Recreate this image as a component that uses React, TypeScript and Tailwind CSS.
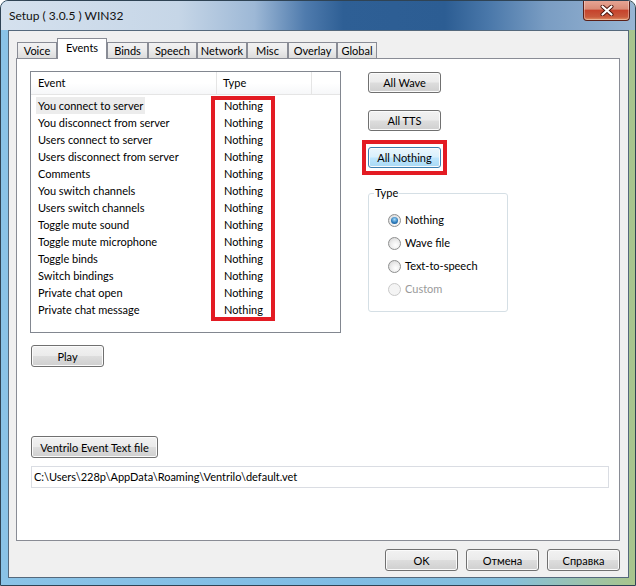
import clsx from "clsx";

const EVENTS = [
  "You connect to server",
  "You disconnect from server",
  "Users connect to server",
  "Users disconnect from server",
  "Comments",
  "You switch channels",
  "Users switch channels",
  "Toggle mute sound",
  "Toggle mute microphone",
  "Toggle binds",
  "Switch bindings",
  "Private chat open",
  "Private chat message",
];

const TABS = [
  { label: "Voice", w: "w-[40px]" },
  { label: "Events", w: "w-[50px]", active: true },
  { label: "Binds", w: "w-[41px]" },
  { label: "Speech", w: "w-[49px]" },
  { label: "Network", w: "w-[50px]" },
  { label: "Misc", w: "w-[41px]" },
  { label: "Overlay", w: "w-[49px]" },
  { label: "Global", w: "w-[40px]" },
];

function Btn({
  children,
  className,
  hot,
}: {
  children: React.ReactNode;
  className?: string;
  hot?: boolean;
}) {
  return (
    <button
      className={clsx(
        "flex items-center justify-center rounded-[3px] border font-normal leading-none text-black shadow-[inset_0_0_0_1px_#fbfbfb]",
        hot
          ? "border-[#3c7fb1] bg-[linear-gradient(180deg,#eaf6fd_0%,#d9f0fc_48%,#bee6fd_52%,#a7d9f5_100%)]"
          : "border-[#707070] bg-[linear-gradient(180deg,#f2f2f2_0%,#ebebeb_48%,#dddddd_52%,#cfcfcf_100%)]",
        className,
      )}
    >
      {children}
    </button>
  );
}

function Radio({ label, checked, disabled }: { label: string; checked?: boolean; disabled?: boolean }) {
  return (
    <div className="flex h-[23px] items-center">
      <span
        className={clsx(
          "flex h-[13px] w-[13px] items-center justify-center rounded-full border",
          disabled
            ? "border-[#c9c9c9] bg-[#f4f4f4]"
            : "border-[#8e8f8f] bg-[radial-gradient(circle_at_60%_65%,#ffffff_0%,#eeeeee_45%,#d0d0d0_100%)]",
        )}
      >
        {checked && (
          <span className="h-[7px] w-[7px] rounded-full bg-[radial-gradient(circle_at_50%_35%,#a6dcfb_0%,#2f7dbc_55%,#0c4a86_100%)]" />
        )}
      </span>
      <span className={clsx("ml-[4px]", disabled && "text-[#9a9a9a]")}>{label}</span>
    </div>
  );
}

// Ventrilo setup dialog, Events tab, Windows 7 Aero look.
export default function App() {
  return (
    <div className="flex h-[586px] w-[636px] flex-col overflow-hidden rounded-t-[8px] border border-[#2f4354] bg-[linear-gradient(90deg,#8ac3e7_0%,#7fbce4_55%,#86bfdc_80%,#a9c58c_100%)] font-['Lato',sans-serif] text-[11px] text-black">
      {/* Title bar */}
      <div className="flex h-[29px] shrink-0 items-start justify-between bg-[linear-gradient(90deg,#d5e1ee_0%,#c6d6e7_28%,#9db8d6_40%,#4f7bad_48%,#2e5f95_54%,#2c5d93_70%,#4a78aa_77%,#7a9dc3_86%,#98b5d3_100%)] pl-[8px] pr-[5px]">
        <span className="pt-[7px] text-[12px] leading-[16px] text-[#111]">Setup ( 3.0.5 ) WIN32</span>
        <div className="-mt-px flex h-[21px] w-[47px] items-center justify-center rounded-b-[4px] border border-t-0 border-[#5b1f17] bg-[linear-gradient(180deg,#e8a797_0%,#d98b77_45%,#c6432c_52%,#c95a3d_85%,#e39466_100%)] shadow-[inset_0_0_0_1px_rgba(255,255,255,0.35)]">
          <svg width="14" height="11" viewBox="0 0 14 11">
            <path d="M2.5 1.5 L11.5 9.5 M11.5 1.5 L2.5 9.5" stroke="#4a140c" strokeWidth="4" strokeLinecap="round" />
            <path d="M2.5 1.5 L11.5 9.5 M11.5 1.5 L2.5 9.5" stroke="#ffffff" strokeWidth="2.2" strokeLinecap="round" />
          </svg>
        </div>
      </div>

      {/* Client area */}
      <div className="ml-[7px] mr-[6px] flex h-[548px] flex-col border border-[#55697c] bg-[#f0f0f0] px-[7px] pr-[8px] pt-[7px]">
        {/* Tabs */}
        <div className="ml-px flex h-[20px] items-end">
          {TABS.map((t) => (
            <div
              key={t.label}
              className={clsx(
                "flex items-center justify-center border border-b-0 border-[#898c95] leading-[15px]",
                t.w,
                t.active
                  ? "relative z-10 -mb-px h-[21px] bg-white pb-[3px]"
                  : "h-[16px] bg-[linear-gradient(180deg,#f2f2f2_0%,#ebebeb_50%,#dcdcdc_100%)]",
              )}
            >
              {t.label}
            </div>
          ))}
        </div>

        {/* Tab panel */}
        <div className="flex h-[483px] flex-col border border-[#898c95] bg-white pl-[13px] pt-[12px]">
          <div className="flex">
            {/* Event list + Play */}
            <div className="flex flex-col">
              <div className="relative h-[262px] w-[311px] border border-[#828790] bg-white">
                <div className="flex h-[23px] border-b border-[#e5e5e5] bg-[linear-gradient(180deg,#ffffff_0%,#ffffff_50%,#f6f7f9_100%)]">
                  <div className="flex w-[186px] items-center border-r border-[#e5e5e5] pl-[7px]">Event</div>
                  <div className="flex w-[95px] items-center border-r border-[#e5e5e5] pl-[6px]">Type</div>
                </div>
                <div className="pt-[2px]">
                  {EVENTS.map((e, i) => (
                    <div key={e} className="flex h-[17px] items-center leading-[17px]">
                      <div className="w-[186px] pl-[5px]">
                        <span className={clsx("inline-block px-[2px]", i === 0 && "bg-[#ececec]")}>{e}</span>
                      </div>
                      <div className="pl-[7px]">Nothing</div>
                    </div>
                  ))}
                </div>
                {/* Highlight annotation */}
                <div className="pointer-events-none absolute left-[180px] top-[24px] h-[225px] w-[64px] border-[4px] border-[#e31b23]" />
              </div>
              <Btn className="ml-px mt-[12px] h-[22px] w-[73px]">Play</Btn>
            </div>

            {/* Right column */}
            <div className="ml-[27px] flex flex-col pt-px">
              <Btn className="h-[21px] w-[73px]">All Wave</Btn>
              <Btn className="mt-[17px] h-[21px] w-[73px]">All TTS</Btn>
              <div className="relative mt-[16px]">
                <Btn hot className="h-[21px] w-[73px]">
                  All Nothing
                </Btn>
                <div className="pointer-events-none absolute -left-[6px] -top-[7px] h-[35px] w-[85px] border-[4px] border-[#e31b23]" />
              </div>

              <div className="relative mt-[25px] h-[119px] w-[140px] rounded-[3px] border border-[#d5dfe5] pl-[19px] pt-[15px]">
                <span className="absolute -top-[9px] left-[5px] bg-white px-px leading-[16px]">Type</span>
                <Radio label="Nothing" checked />
                <Radio label="Wave file" />
                <Radio label="Text-to-speech" />
                <Radio label="Custom" disabled />
              </div>
            </div>
          </div>

          <Btn className="ml-px mt-[69px] h-[22px] w-[127px]">Ventrilo Event Text file</Btn>
          <div className="ml-px mt-[8px] flex h-[22px] w-[578px] items-center border border-[#dadde3] pl-[2px]">
            {"C:\\Users\\228p\\AppData\\Roaming\\Ventrilo\\default.vet"}
          </div>
        </div>

        {/* Dialog buttons */}
        <div className="mt-[8px] flex justify-end gap-[8px]">
          <Btn className="h-[22px] w-[73px]">OK</Btn>
          <Btn className="h-[22px] w-[73px]">Отмена</Btn>
          <Btn className="h-[22px] w-[73px]">Справка</Btn>
        </div>
      </div>
    </div>
  );
}
